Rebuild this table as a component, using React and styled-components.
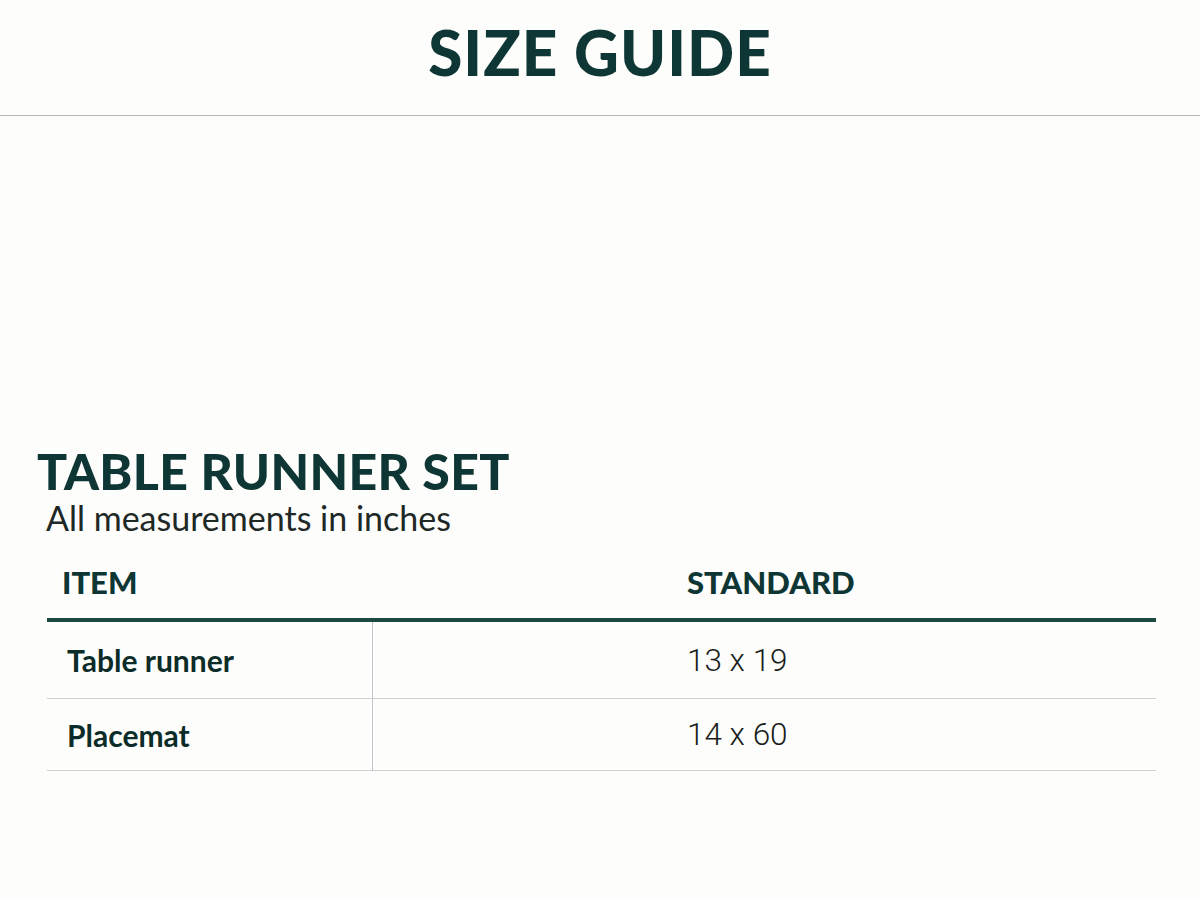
import React from "react";
import styled, { createGlobalStyle } from "styled-components";

const GlobalStyle = createGlobalStyle`
  html, body {
    margin: 0;
    padding: 0;
    background: #fdfdfb;
  }
  body {
    font-family: "Lato", "Liberation Sans", sans-serif;
  }
`;

const Page = styled.div`
  width: 1200px;
  height: 900px;
  background: #fdfdfb;
  overflow: hidden;
`;

const Header = styled.header`
  height: 116px;
  display: flex;
  justify-content: center;
  align-items: center;
  border-bottom: 1px solid #b4b6b8;
  box-sizing: border-box;
`;

const Title = styled.h1`
  margin: 0;
  margin-top: -12px;
  font-family: "Lato", sans-serif;
  font-weight: 900;
  font-size: 62px;
  letter-spacing: 1px;
  color: #0d3634;
`;

const Section = styled.section`
  padding: 328px 44px 0 37px;
`;

const SetTitle = styled.h2`
  margin: 0;
  font-family: "Lato", sans-serif;
  font-weight: 900;
  font-size: 50px;
  line-height: 1.1;
  letter-spacing: 0.3px;
  color: #0d3634;
`;

const Note = styled.p`
  margin: 0 0 0 9px;
  font-family: "Lato", sans-serif;
  font-weight: 400;
  font-size: 34px;
  line-height: 1.1;
  color: #202826;
`;

const Table = styled.div`
  margin: 18px 0 0 10px;
  display: grid;
  grid-template-columns: 326px 1fr;
`;

const HeadCell = styled.div`
  height: 54px;
  padding: 10px 0 0 ${({ $indent }) => $indent}px;
  border-bottom: 4px solid #1b4a40;
  font-family: "Lato", sans-serif;
  font-weight: 900;
  font-size: 31px;
  line-height: 1.2;
  color: #0d3634;
`;

const Cell = styled.div`
  display: flex;
  align-items: center;
  height: ${({ $h }) => $h}px;
  padding-left: ${({ $indent }) => $indent}px;
  border-bottom: 1px solid #cfd0d2;
  border-right: ${({ $divider }) => ($divider ? "1px solid #c4c5c8" : "none")};
`;

const ItemName = styled.span`
  font-family: "Lato", sans-serif;
  font-weight: 700;
  font-size: 30px;
  color: #0c2c29;
`;

const Value = styled.span`
  font-family: "Roboto", sans-serif;
  font-weight: 300;
  font-size: 31.5px;
  color: #1a1d1c;
`;

const rows = [
  { name: "Table runner", size: "13 x 19", h: 76 },
  { name: "Placemat", size: "14 x 60", h: 71 },
];

export default function App() {
  return (
    <Page>
      <GlobalStyle />
      <Header>
        <Title>SIZE GUIDE</Title>
      </Header>
      <Section>
        <SetTitle>TABLE RUNNER SET</SetTitle>
        <Note>All measurements in inches</Note>
        <Table>
          <HeadCell $indent={15}>ITEM</HeadCell>
          <HeadCell $indent={314}>STANDARD</HeadCell>
          {rows.map((r) => (
            <React.Fragment key={r.name}>
              <Cell $h={r.h} $indent={20} $divider>
                <ItemName>{r.name}</ItemName>
              </Cell>
              <Cell $h={r.h} $indent={314}>
                <Value>{r.size}</Value>
              </Cell>
            </React.Fragment>
          ))}
        </Table>
      </Section>
    </Page>
  );
}
